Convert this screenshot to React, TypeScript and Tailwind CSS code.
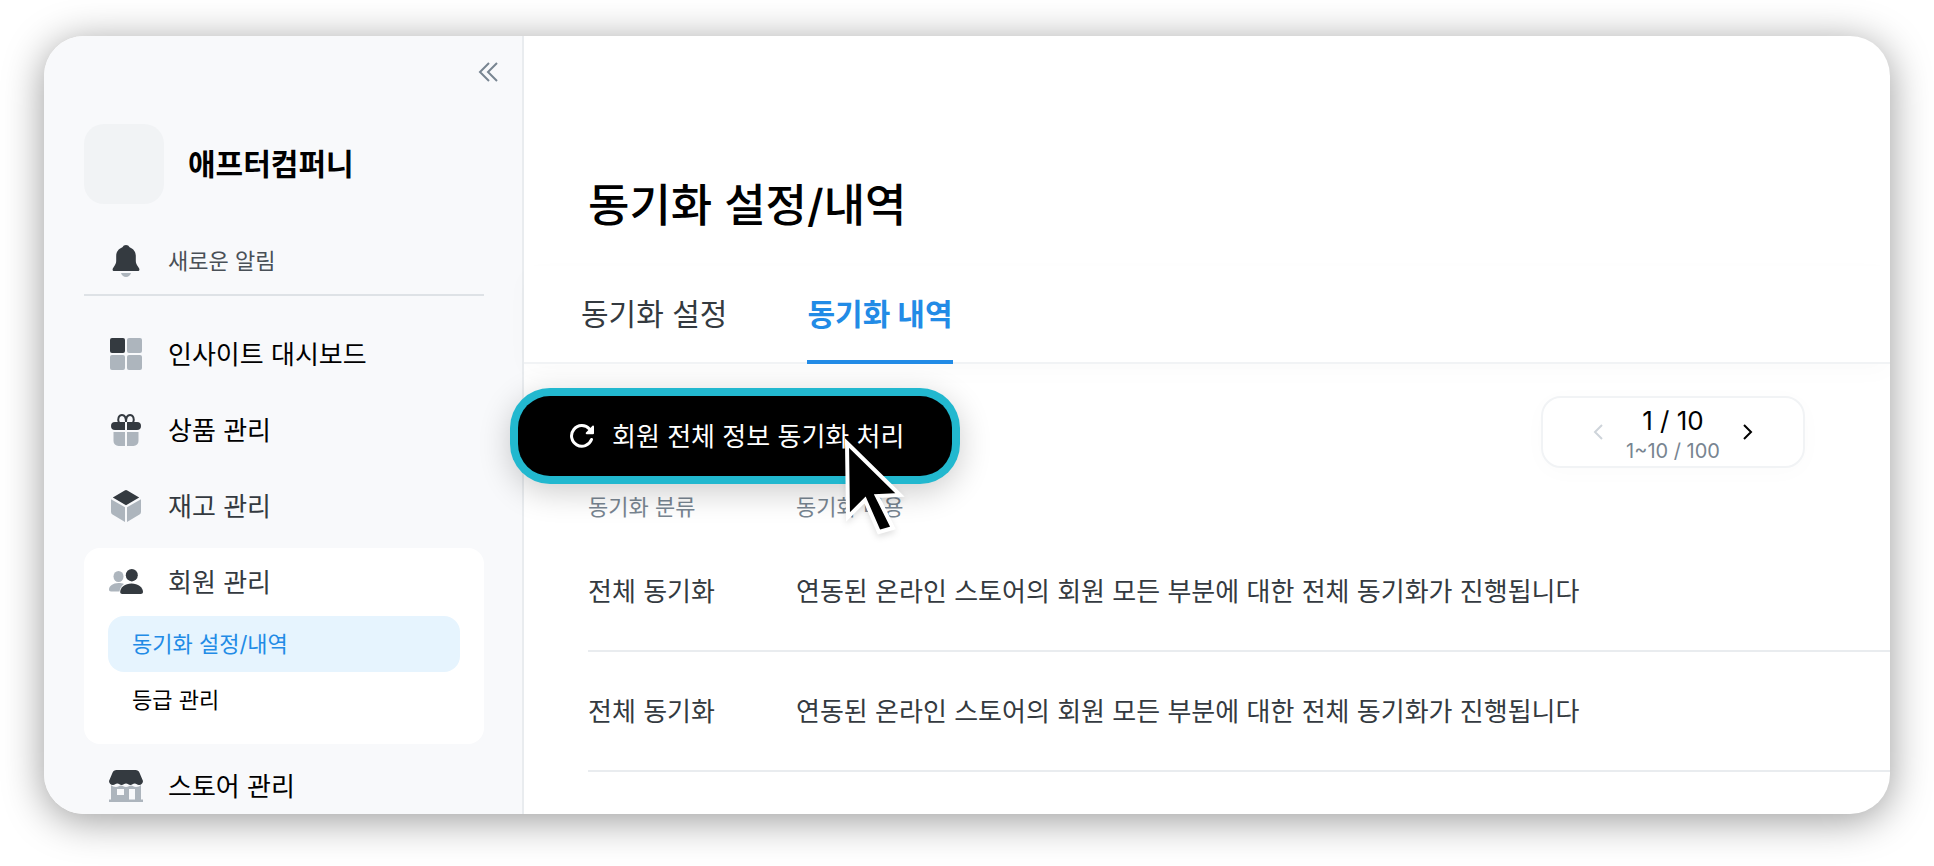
import { useState } from "react";

const FONT = "font-['Inter','Noto_Sans_CJK_KR',sans-serif]";

function BellIcon() {
  return (
    <svg width="32" height="32" viewBox="0 0 32 32" aria-hidden="true">
      <path
        d="M16 0a4 4 0 0 0-3.6 2.3C8.500 3.800 6.200 7 6.200 11v5c0 2.200-.9 3.900-2.600 6.300C1.800 24.800 2.600 26 4.200 26h23.600c1.600 0 2.400-1.200.6-3.700-1.700-2.400-2.600-4.100-2.600-6.300v-5c0-4-2.300-7.200-6.200-8.700A4 4 0 0 0 16 0Z"
        fill="#343a40"
      />
      <path d="M11 28h10c-.5 2.300-2.500 4-5 4s-4.500-1.700-5-4Z" fill="#adb5bd" />
    </svg>
  );
}

function DashboardIcon() {
  return (
    <svg width="32" height="32" viewBox="0 0 32 32" aria-hidden="true">
      <rect width="15" height="15" rx="2" fill="#343a40" />
      <rect x="17" width="15" height="15" rx="2" fill="#adb5bd" />
      <rect y="17" width="15" height="15" rx="2" fill="#adb5bd" />
      <rect x="17" y="17" width="15" height="15" rx="2" fill="#adb5bd" />
    </svg>
  );
}

function GiftIcon() {
  return (
    <svg width="32" height="32" viewBox="0 0 32 32" aria-hidden="true">
      <path
        d="M9 9C7 4.500 9 1 12 1s4 2 4 7c0-5 1-7 4-7s5 3.500 3 8"
        fill="none"
        stroke="#343a40"
        strokeWidth="2"
      />
      <path d="M15 8v8H5a4 4 0 0 1 0-8ZM17 8v8h10a4 4 0 0 0 0-8Z" fill="#343a40" />
      <path d="M3.500 18H15v14H8.500a5 5 0 0 1-5-5ZM17 18h11.500v9a5 5 0 0 1-5 5H17Z" fill="#adb5bd" />
    </svg>
  );
}

function BoxIcon() {
  return (
    <svg width="32" height="32" viewBox="0 0 32 32" aria-hidden="true">
      <path d="M14.700.4a2.500 2.500 0 0 1 2.600 0L29.200 7.500 16 15.300 2.800 7.500Z" fill="#343a40" />
      <path d="M1 9.200 15 17.300V32L2.500 24.600A3 3 0 0 1 1 22ZM31 9.200 17 17.300V32l12.500-7.400A3 3 0 0 0 31 22Z" fill="#adb5bd" />
    </svg>
  );
}

function MembersIcon() {
  return (
    <svg width="34" height="26" viewBox="0 0 34 26" aria-hidden="true">
      <ellipse cx="9.500" cy="7.500" rx="5" ry="5.500" fill="#adb5bd" />
      <path d="M15 15c-1.500-.7-3.400-1-5.500-1C4 14 0 17 0 20.500c0 1 .6 2 2 2h8.500c.4-3.200 2-5.700 4.500-7.500Z" fill="#adb5bd" />
      <ellipse cx="22.800" cy="6.200" rx="6" ry="6.200" fill="#343a40" />
      <path d="M22.500 14.500C16 14.500 11.200 18.500 11.200 23c0 1.200.8 2 2 2h18.600c1.200 0 2.200-.8 2.200-2 0-4.500-5-8.500-11.500-8.500Z" fill="#343a40" />
    </svg>
  );
}

function StoreIcon() {
  return (
    <svg width="34" height="32" viewBox="0 0 34 32" aria-hidden="true">
      <path
        d="M2 15c1 1 3 2 5 2 2.200 0 3.500-1.500 5-1.500S15 17 17 17s3.500-1.500 5-1.500S24.800 17 27 17c2 0 4-1 5-2v14.500h2V32H0v-2.500h2ZM8 19v6h7v-6ZM20 19v10.500h6V19Z"
        fill="#adb5bd"
        fillRule="evenodd"
      />
      <path
        d="M7.500 0h19c2 0 3.300 1 4 2.800L34 11c0 2.300-1.600 4-4 4-1.800 0-2.500-1.500-4.300-1.500S23.200 15 21.400 15s-2.600-1.500-4.400-1.500S14.400 15 12.600 15s-2.500-1.500-4.300-1.500S5.800 15 4 15c-2.400 0-4-1.700-4-4l3.500-8.200C4.200 1 5.500 0 7.500 0Z"
        fill="#343a40"
      />
    </svg>
  );
}

function RefreshIcon() {
  return (
    <svg width="24" height="24" viewBox="0 0 24 24" aria-hidden="true">
      <path d="M21.500 15.500A10.300 10.300 0 1 1 19.500 5" fill="none" stroke="#fff" strokeWidth="3" strokeLinecap="round" />
      <path d="M24 2.500v6.700a1 1 0 0 1-1 1h-6.300c-1 0-1.300-1-.7-1.600l6.500-6.800c.6-.6 1.500-.2 1.500.7Z" fill="#fff" />
    </svg>
  );
}

function CursorIcon() {
  return (
    <svg
      width="64"
      height="104"
      viewBox="0 0 64 104"
      className="pointer-events-none absolute top-10 left-[324px] drop-shadow-md"
      aria-hidden="true"
    >
      <path d="M5 7 58 59 35 60 51 92 37 96 23 64 6 81Z" fill="#000" stroke="#fff" strokeWidth="4" />
    </svg>
  );
}

const navItems = [
  { label: "인사이트 대시보드", icon: <DashboardIcon />, color: "text-black" },
  { label: "상품 관리", icon: <GiftIcon />, color: "text-black" },
  { label: "재고 관리", icon: <BoxIcon />, color: "text-[#343a40]" },
];

const tabs = ["동기화 설정", "동기화 내역"];

const rows = [
  { type: "전체 동기화", content: "연동된 온라인 스토어의 회원 모든 부분에 대한 전체 동기화가 진행됩니다" },
  { type: "전체 동기화", content: "연동된 온라인 스토어의 회원 모든 부분에 대한 전체 동기화가 진행됩니다" },
];

function NavLink({ label, icon, className }: { label: string; icon: React.ReactNode; className: string }) {
  return (
    <a href="#" className={`flex items-center gap-6 pl-6 text-[26px] ${className}`}>
      <span className="flex w-9 justify-center">{icon}</span>
      {label}
    </a>
  );
}

function Sidebar() {
  return (
    <aside className="w-[480px] shrink-0 border-r-2 border-[#e9ecef] bg-[#f8f9fb] pr-[38px] pl-10">
      <div className="flex h-[72px] items-center justify-end">
        <button type="button" aria-label="사이드바 접기" className="-mr-4 p-0.5">
          <svg width="20" height="20" viewBox="0 0 20 20" fill="none" stroke="#788591" strokeWidth="2" aria-hidden="true">
            <path d="M11 1 2 10l9 9M19 1l-9 9 9 9" />
          </svg>
        </button>
      </div>
      <div className="mt-4 flex items-center gap-6">
        <div className="size-20 rounded-[20px] bg-[#f1f3f5]" />
        <p className="text-[30px] font-bold text-black">애프터컴퍼니</p>
      </div>
      <a
        href="#"
        className="mt-6 flex h-[68px] items-center gap-6 border-b-2 border-[#dee2e6] pl-6 text-[22px] text-[#495057]"
      >
        <span className="flex w-9 justify-center">
          <BellIcon />
        </span>
        새로운 알림
      </a>
      <nav className="pt-5">
        {navItems.map((item) => (
          <NavLink key={item.label} label={item.label} icon={item.icon} className={`h-[76px] ${item.color}`} />
        ))}
        <div className="my-1 rounded-2xl bg-white pb-4">
          <NavLink label="회원 관리" icon={<MembersIcon />} className="h-[68px] text-[#343a40]" />
          <div className="px-6 text-[22px]">
            <a href="#" className="flex h-14 items-center rounded-2xl bg-[#e6f4fe] px-6 text-[#228be6]">
              동기화 설정/내역
            </a>
            <a href="#" className="flex h-14 items-center px-6 text-black">
              등급 관리
            </a>
          </div>
        </div>
        <NavLink label="스토어 관리" icon={<StoreIcon />} className="h-[76px] text-black" />
      </nav>
    </aside>
  );
}

function Pager() {
  return (
    <div className="flex h-[72px] w-[264px] items-center justify-between rounded-[20px] border-2 border-[#f1f3f5] bg-white px-12 shadow-[0_4px_24px_rgba(0,0,0,0.02)]">
      <button type="button" aria-label="이전" disabled>
        <svg width="14" height="16" viewBox="0 0 14 16" fill="none" stroke="#ced4da" strokeWidth="2" aria-hidden="true">
          <path d="m11 1-7 7 7 7" />
        </svg>
      </button>
      <div className="pt-1.5 text-center">
        <p className="text-[26px] leading-8 text-black">1 / 10</p>
        <p className="text-xl leading-7 text-[#788591]">1~10 / 100</p>
      </div>
      <button type="button" aria-label="다음">
        <svg width="14" height="16" viewBox="0 0 14 16" fill="none" stroke="#000" strokeWidth="2" aria-hidden="true">
          <path d="m3 1 7 7-7 7" />
        </svg>
      </button>
    </div>
  );
}

export default function App() {
  const [activeTab, setActiveTab] = useState("동기화 내역");

  return (
    <div className={`h-screen bg-white px-11 pt-9 pb-[52px] ${FONT}`}>
      <div className="flex h-full overflow-hidden rounded-[40px] bg-white shadow-[0_6px_40px_rgba(0,0,0,0.4)]">
        <Sidebar />
        <main className="min-w-0 flex-1">
          <h1 className="pt-[138px] pl-16 text-[45px] leading-[64px] font-medium text-black">동기화 설정/내역</h1>
          <div
            role="tablist"
            className="mt-7 flex h-[98px] gap-20 border-b-2 border-[#f1f3f5] pl-[57px] text-[30px] shadow-[0_8px_24px_rgba(0,0,0,0.02)]"
          >
            {tabs.map((tab) => (
              <button
                key={tab}
                type="button"
                role="tab"
                aria-selected={activeTab === tab}
                onClick={() => setActiveTab(tab)}
                className={`-mb-0.5 border-b-4 pt-0.5 ${
                  activeTab === tab ? "border-[#228be6] font-bold text-[#228be6]" : "border-transparent text-[#343a40]"
                }`}
              >
                {tab}
              </button>
            ))}
          </div>
          <div className="flex h-[118px] items-start justify-between pt-8 pr-[85px]">
            <div className="relative z-10 -ml-1.5">
              <button
                type="button"
                className="flex h-20 items-center gap-[18px] rounded-[32px] bg-black pr-12 pl-13 text-[26px] text-white shadow-[0_8px_32px_8px_rgba(0,0,0,0.2)] ring-8 ring-[#22b8cf]"
              >
                <RefreshIcon />
                회원 전체 정보 동기화 처리
              </button>
              <CursorIcon />
            </div>
            <Pager />
          </div>
          <div className="pl-16">
            <table className="w-full border-separate border-spacing-0 text-left">
              <thead>
                <tr className="h-[50px] text-[22px] text-[#788591]">
                  <th className="w-[208px] font-normal">동기화 분류</th>
                  <th className="font-normal">동기화 내용</th>
                </tr>
              </thead>
              <tbody className="text-[26px] text-[#343a40]">
                {rows.map((row, i) => (
                  <tr key={i} className="h-[120px]">
                    <td className="border-b-2 border-[#e9ecef]">{row.type}</td>
                    <td className="border-b-2 border-[#e9ecef] whitespace-nowrap">{row.content}</td>
                  </tr>
                ))}
              </tbody>
            </table>
          </div>
        </main>
      </div>
    </div>
  );
}
